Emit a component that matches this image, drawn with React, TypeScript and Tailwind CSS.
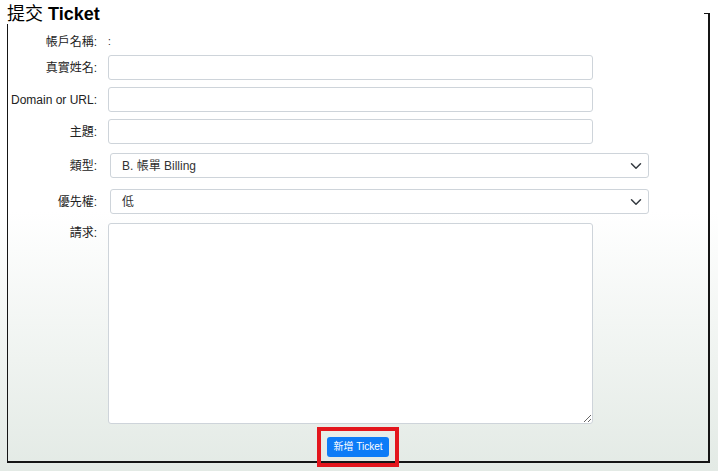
import React from "react";

const font = { fontFamily: '"Liberation Sans", "Noto Sans CJK TC", sans-serif' };

const Chevron = () => (
  <svg width="12" height="12" viewBox="0 0 16 16" className="absolute right-[6px] top-[6px] pointer-events-none">
    <path d="M2 5l6 6 6-6" fill="none" stroke="#343a40" strokeWidth="2" strokeLinecap="round" strokeLinejoin="round" />
  </svg>
);

function Row({ label, children, className = "" }: { label: string; children?: React.ReactNode; className?: string }) {
  return (
    <div className={"flex items-center " + className}>
      <label className="w-[89px] shrink-0 text-right text-[12px] text-[#222]">{label}</label>
      <div className="ml-[11px] flex-1 flex">{children}</div>
    </div>
  );
}

export default function App() {
  const inputCls = "w-[485px] h-[25px] border border-[#ced4da] rounded-[3px] bg-white px-2 text-[12px] outline-none";
  const selectCls =
    "relative ml-[2px] w-[539px] h-[25px] border border-[#ced4da] rounded-[3px] bg-white pl-[11px] text-[12px] text-[#333] flex items-center";

  return (
    <div className="w-[718px] h-[471px] bg-gradient-to-b from-white from-45% to-[#e3eae5] pt-[13px] pl-[7px]" style={font}>
      <div className="w-[703px] h-[450px] border-t border-l border-r-2 border-b-2 border-[#151515]">
        <h1 className="-mt-[9px] -ml-px w-[697px] h-[19px] bg-white text-[18px] leading-[19px] text-black">
          提交 <span className="font-bold">Ticket</span>
        </h1>

        <div className="pt-[10px]">
          <Row label="帳戶名稱:" className="h-[16px]">
            <span className="text-[10px] leading-none text-[#222]">:</span>
          </Row>
          <Row label="真實姓名:" className="mt-[5px]">
            <input className={inputCls} />
          </Row>
          <Row label="Domain or URL:" className="mt-[7px]">
            <input className={inputCls} />
          </Row>
          <Row label="主題:" className="mt-[7px]">
            <input className={inputCls} />
          </Row>
          <Row label="類型:" className="mt-[9px]">
            <div className={selectCls}>
              B. 帳單 Billing
              <Chevron />
            </div>
          </Row>
          <Row label="優先權:" className="mt-[11px]">
            <div className={selectCls}>
              低
              <Chevron />
            </div>
          </Row>
          <div className="flex items-start mt-[9px]">
            <label className="w-[89px] shrink-0 text-right text-[12px] text-[#222] pt-[1px]">請求:</label>
            <textarea className="ml-[11px] w-[485px] h-[201px] border border-[#ced4da] rounded-[3px] bg-white outline-none" />
          </div>

          <div className="flex justify-center mt-[13px]">
            <div className="outline-4 outline-solid outline-[#e3161d] outline-offset-[6px]">
              <button className="h-[20px] px-[6px] rounded-[3px] bg-[#0d7cf7] text-white text-[10px] leading-[20px] block">
                新增 Ticket
              </button>
            </div>
          </div>
        </div>
      </div>
    </div>
  );
}
